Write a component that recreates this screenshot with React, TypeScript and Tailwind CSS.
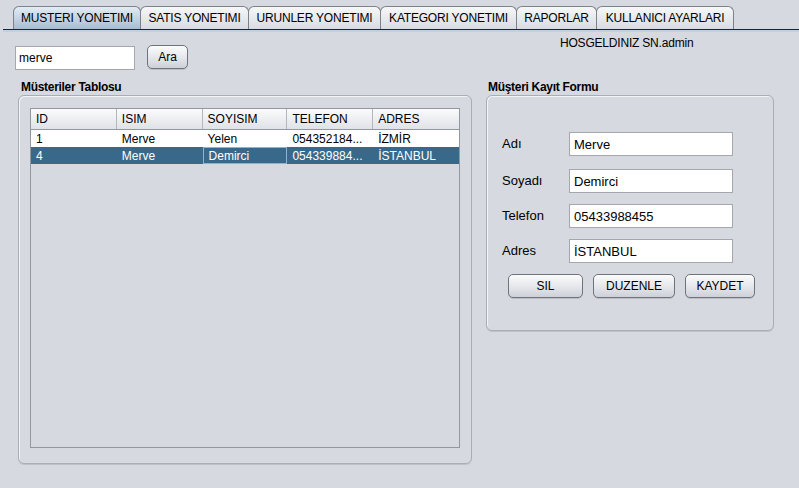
import React from "react";

const TABS = [
  { label: "MUSTERI YONETIMI", w: 128, active: true },
  { label: "SATIS YONETIMI", w: 109 },
  { label: "URUNLER YONETIMI", w: 133 },
  { label: "KATEGORI YONETIMI", w: 137 },
  { label: "RAPORLAR", w: 81 },
  { label: "KULLANICI AYARLARI", w: 138 },
];

const COLS = [
  { label: "ID", w: 86 },
  { label: "ISIM", w: 86 },
  { label: "SOYISIM", w: 85 },
  { label: "TELEFON", w: 86 },
  { label: "ADRES", w: 86 },
];

const ROWS = [
  ["1", "Merve", "Yelen", "054352184...", "İZMİR"],
  ["4", "Merve", "Demirci", "054339884...", "İSTANBUL"],
];

const FIELDS = [
  { label: "Adı", value: "Merve", mt: 0 },
  { label: "Soyadı", value: "Demirci", mt: 13 },
  { label: "Telefon", value: "05433988455", mt: 11 },
  { label: "Adres", value: "İSTANBUL", mt: 11 },
];

function NimbusButton({ children, w }: { children: React.ReactNode; w: number }) {
  return (
    <button
      className="h-[24px] rounded-[5px] border border-[#6f747c] bg-gradient-to-b from-[#fbfbfc] via-[#e6e8ec] to-[#cdd1d8] text-[12px] text-black shadow-[0_1px_0_rgba(0,0,0,0.12)]"
      style={{ width: w }}
    >
      {children}
    </button>
  );
}

export default function App() {
  return (
    <div className="w-[799px] h-[488px] bg-[#d6d9df] text-black text-[12px] overflow-hidden" style={{ fontFamily: '"Liberation Sans", Arial, sans-serif' }}>
      {/* Tab strip */}
      <div className="flex items-end pl-[13px] pt-[6px] h-[29px]">
        {TABS.map((t) => (
          <div
            key={t.label}
            className={
              "h-[23px] flex items-center justify-center rounded-t-[6px] border border-b-0 border-[#7d828a] -mr-px " +
              (t.active
                ? "bg-gradient-to-b from-[#e3ecf4] to-[#a7bdd3]"
                : "bg-gradient-to-b from-[#f6f7f8] to-[#d8dce2]")
            }
            style={{ width: t.w }}
          >
            <span className="tracking-[-0.2px]">{t.label}</span>
          </div>
        ))}
      </div>
      <div className="ml-[3px] h-[1px] bg-[#1b2330]" />
      <div className="ml-[3px] h-[2px] bg-[#bfd1e3]" />

      {/* Search row */}
      <div className="flex items-start h-[48px]">
        <input
          readOnly
          value="merve"
          className="ml-[15px] mt-[14px] w-[120px] h-[24px] bg-white border border-[#a4a8ae] px-[3px] text-[12px] outline-none"
        />
        <div className="ml-[12px] mt-[13px]">
          <NimbusButton w={41}>Ara</NimbusButton>
        </div>
        <div className="ml-[372px] mt-[2px] tracking-[-0.2px]">HOSGELDINIZ SN.admin</div>
      </div>

      {/* Panels */}
      <div className="flex items-start">
        {/* Left group */}
        <div className="ml-[18px] w-[454px]">
          <div className="pl-[3px] h-[15px] font-bold text-[12px] leading-[15px] tracking-[-0.3px]">Müsteriler Tablosu</div>
          <div className="h-[369px] rounded-[6px] border border-[#a9adb4] shadow-[inset_1px_1px_0_#f2f3f5,0_1px_0_#bfc3c9] px-[11px] pt-[12px] pb-[15px]">
            <div className="h-full border border-[#9297a0] bg-[#d6d9df] flex flex-col">
              <div className="flex h-[21px] bg-gradient-to-b from-[#fbfbfc] to-[#dfe2e7] border-b border-[#9297a0]">
                {COLS.map((c, i) => (
                  <div
                    key={c.label}
                    className={"flex items-center pl-[5px] " + (i < COLS.length - 1 ? "border-r border-[#b3b7bd]" : "")}
                    style={{ width: c.w }}
                  >
                    {c.label}
                  </div>
                ))}
              </div>
              {ROWS.map((r, ri) => {
                const sel = ri === 1;
                return (
                  <div key={ri} className={"flex h-[17px] " + (sel ? "bg-[#39698a] text-white" : "bg-white")}>
                    {r.map((cell, ci) => (
                      <div
                        key={ci}
                        className={
                          "flex items-center pl-[5px] whitespace-nowrap overflow-hidden " +
                          (sel && ci === 2 ? "border border-[#8fb2cf]" : "")
                        }
                        style={{ width: COLS[ci].w }}
                      >
                        {cell}
                      </div>
                    ))}
                  </div>
                );
              })}
            </div>
          </div>
        </div>

        {/* Right group */}
        <div className="ml-[14px] w-[288px]">
          <div className="pl-[2px] h-[15px] font-bold text-[12px] leading-[15px] tracking-[-0.3px]">Müşteri Kayıt Formu</div>
          <div className="h-[236px] rounded-[6px] border border-[#a9adb4] shadow-[inset_1px_1px_0_#f2f3f5,0_1px_0_#bfc3c9] pt-[36px]">
            <div className="flex flex-col">
              {FIELDS.map((f) => (
                <div key={f.label} className="flex items-center h-[24px]" style={{ marginTop: f.mt }}>
                  <span className="ml-[15px] w-[67px] text-[13px]">{f.label}</span>
                  <input
                    readOnly
                    value={f.value}
                    className="w-[164px] h-[24px] bg-white border border-[#a4a8ae] px-[4px] text-[13px] outline-none"
                  />
                </div>
              ))}
            </div>
            <div className="flex mt-[11px] ml-[21px] gap-[10px]">
              <NimbusButton w={75}>SIL</NimbusButton>
              <NimbusButton w={82}>DUZENLE</NimbusButton>
              <NimbusButton w={70}>KAYDET</NimbusButton>
            </div>
          </div>
        </div>
      </div>
    </div>
  );
}
